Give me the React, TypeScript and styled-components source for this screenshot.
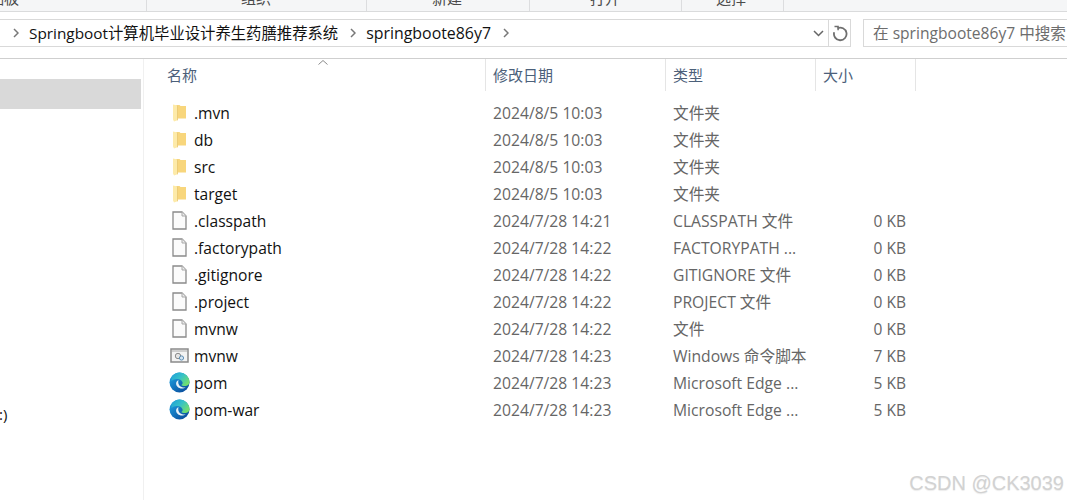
import React from 'react';
import styled, { createGlobalStyle } from 'styled-components';

const GlobalStyle = createGlobalStyle`
  html, body {
    margin: 0;
    padding: 0;
    background: #fff;
  }
  body {
    font-family: 'Open Sans', 'Noto Sans CJK SC', sans-serif;
  }
`;

const Window = styled.div`
  position: relative;
  width: 1067px;
  height: 500px;
  overflow: hidden;
  background: #fff;
  color: #1a1a1a;
`;

const Ribbon = styled.div`
  display: flex;
  height: 11px;
  overflow: hidden;
  background: #f5f6f7;
  border-bottom: 1px solid #dadbdc;
`;

const RibbonGroup = styled.div<{ $width: number }>`
  display: flex;
  align-items: flex-end;
  box-sizing: border-box;
  flex: none;
  width: ${(p) => p.$width}px;
  height: 11px;
  padding-bottom: 5px;
  border-right: 1px solid #dcdddf;
`;

const RibbonLabel = styled.span<{ $indent: number }>`
  margin-left: ${(p) => p.$indent}px;
  font-size: 15px;
  line-height: 15px;
  color: #4a4a4a;
  white-space: nowrap;
`;

const AddressRow = styled.div`
  display: flex;
  align-items: stretch;
  height: 28px;
  margin-top: 7px;
`;

const AddressBox = styled.div`
  display: flex;
  align-items: center;
  box-sizing: border-box;
  flex: none;
  width: 851px;
  border: 1px solid #d9d9d9;
  border-left: none;
  padding-left: 13px;
`;

const Crumb = styled.span<{ $size: number }>`
  font-size: ${(p) => p.$size}px;
  line-height: 20px;
  color: #111;
  white-space: nowrap;
  margin: 0 12px 0 10px;
`;

const Spacer = styled.div`
  flex: 1;
`;

const DropCaret = styled.svg`
  flex: none;
  margin-right: 4px;
`;

const RefreshCell = styled.div`
  display: flex;
  align-items: center;
  justify-content: center;
  align-self: stretch;
  flex: none;
  width: 21px;
  border-left: 1px solid #d9d9d9;
`;

const SearchBox = styled.div`
  flex: 1;
  margin-left: 12px;
  box-sizing: border-box;
  border: 1px solid #d9d9d9;
  border-right: none;
  padding-left: 9px;
  font-size: 15.6px;
  line-height: 26px;
  color: #6d6d6d;
  white-space: nowrap;
  overflow: hidden;
`;

const Body = styled.div`
  display: flex;
  height: 441px;
  margin-top: 11px;
  border-top: 1px solid #cfcfcf;
`;

const Sidebar = styled.div`
  flex: none;
  box-sizing: border-box;
  width: 144px;
  padding-top: 20px;
  border-right: 1px solid #f0f0f0;
`;

const SelectedNav = styled.div`
  width: 141px;
  height: 30px;
  background: #d9d9d9;
`;

const NavCut = styled.span`
  display: block;
  margin: 295px 0 0 -1px;
  font-size: 15px;
  line-height: 20px;
  color: #111;
`;

const Content = styled.div`
  flex: 1;
  min-width: 0;
`;

const HeaderRow = styled.div`
  position: relative;
  display: flex;
  height: 32px;
`;

const SortCaret = styled.svg`
  position: absolute;
  left: 174px;
  top: 1px;
`;

const HeaderCell = styled.div<{ $width: number }>`
  box-sizing: border-box;
  flex: none;
  width: ${(p) => p.$width}px;
  padding-left: 7px;
  font-size: 15px;
  line-height: 32px;
  color: #4c607a;
  border-right: 1px solid #e5e5e5;
  &:first-of-type {
    padding-left: 23px;
  }
`;

const Rows = styled.div`
  padding-top: 8px;
`;

const Row = styled.div`
  display: flex;
  align-items: center;
  height: 27px;
`;

const NameCell = styled.div`
  display: flex;
  align-items: center;
  flex: none;
  width: 342px;
  box-sizing: border-box;
  padding-left: 24px;
  font-size: 15.6px;
  color: #111;
`;

const IconSlot = styled.span`
  display: flex;
  align-items: center;
  justify-content: center;
  flex: none;
  width: 22px;
  height: 22px;
  margin-right: 4px;
`;

const DimCell = styled.div<{ $width: number }>`
  flex: none;
  box-sizing: border-box;
  width: ${(p) => p.$width}px;
  padding-left: 7px;
  font-size: 15.7px;
  color: #666;
  white-space: nowrap;
`;

const SizeCell = styled.div`
  flex: none;
  box-sizing: border-box;
  width: 90px;
  text-align: right;
  font-size: 15.5px;
  color: #666;
`;

const Watermark = styled.div`
  position: absolute;
  right: 3px;
  bottom: 6px;
  font-family: 'Liberation Sans', sans-serif;
  font-size: 20px;
  line-height: 22px;
  color: #d2d2d2;
  text-shadow: 0 1px 1px rgba(0, 0, 0, 0.08);
`;

const Chevron = () => (
  <svg width="6" height="10" viewBox="0 0 6 10" fill="none">
    <path d="M1 1l4 4-4 4" stroke="#777" strokeWidth="1.5" />
  </svg>
);

const FolderIcon = () => (
  <svg width="13" height="18" viewBox="0 0 13 18">
    <path d="M3 1h3.500l1 1H13v12.500H3z" fill="#f8d67c" />
    <path d="M0 .6l4.500.9v14.800L1 17.400 0 15.500z" fill="#fdeaa9" />
    <path d="M4.500 1.500v14.800" stroke="#e8c670" strokeWidth="0.8" />
  </svg>
);

const FileIcon = () => (
  <svg width="15" height="19" viewBox="0 0 15 19" fill="none">
    <path d="M1 1h9l4 4v13H1z" fill="#fbfbfb" stroke="#8a8a8a" strokeWidth="1.300" />
    <path d="M10 1v4h4" fill="#ececec" stroke="#a8a8a8" />
  </svg>
);

const ScriptIcon = () => (
  <svg width="19" height="15" viewBox="0 0 19 15" fill="none">
    <rect x="1" y="1" width="17" height="13" fill="#f3f3f3" stroke="#8a8a8a" strokeWidth="1.500" />
    <path d="M2 2h15v2H2z" fill="#cfcfcf" />
    <circle cx="8" cy="8" r="2.700" fill="#e4e4e4" stroke="#8b8b8b" />
    <circle cx="11.500" cy="10" r="2.100" fill="#d5e6f4" stroke="#5e8fb5" />
  </svg>
);

const EdgeIcon = ({ id }: { id: string }) => (
  <svg width="21" height="21" viewBox="0 0 21 21">
    <defs>
      <linearGradient id={`${id}-a`} x1="0" y1="0.200" x2="0.700" y2="1">
        <stop offset="0" stopColor="#1f9fe0" />
        <stop offset="1" stopColor="#0a4f9e" />
      </linearGradient>
      <linearGradient id={`${id}-b`} x1="0" y1="0" x2="1" y2="0.700">
        <stop offset="0" stopColor="#1f9fd8" />
        <stop offset="0.500" stopColor="#35c1c8" />
        <stop offset="1" stopColor="#74e06a" />
      </linearGradient>
    </defs>
    <circle cx="10.500" cy="10.500" r="10" fill={`url(#${id}-a)`} />
    <path
      d="M2.500 5C4.500 2 7.500.5 10.500.5c5.500 0 10 4.300 10 9.500 0 2.800-2.300 4-4.800 4-1.700 0-2.900-.5-3.300-1.100 1.100-.8 1.500-1.800 1-3-.7-1.700-3-2.900-5.400-2.900-2.300 0-4.300.8-5.500 2z"
      fill={`url(#${id}-b)`}
    />
    <path
      d="M9.500 8c-1.500.7-2.400 2-2.400 3.600 0 2.800 2.600 5 5.700 5 1.500 0 3-.4 4.200-1.300-1.200.3-2.500.3-3.700 0-1.600-.4-2.900-1.400-3.500-2.700-.7-1.400-.7-3.100-.3-4.600z"
      fill="#fff"
      opacity="0.900"
    />
  </svg>
);

const RefreshIcon = () => (
  <svg width="16" height="17" viewBox="0 0 16 17" fill="none">
    <path d="M5.500 3.300A6.300 6.300 0 1 1 2.200 7.200" stroke="#6f6f6f" strokeWidth="1.800" />
    <path d="M2.500 1.600h3.600v3.600" stroke="#6f6f6f" strokeWidth="1.500" />
  </svg>
);

type Entry = {
  name: string;
  date: string;
  kind: string;
  size?: string;
  icon: 'folder' | 'file' | 'script' | 'edge';
};

const entries: Entry[] = [
  { name: '.mvn', date: '2024/8/5 10:03', kind: '文件夹', icon: 'folder' },
  { name: 'db', date: '2024/8/5 10:03', kind: '文件夹', icon: 'folder' },
  { name: 'src', date: '2024/8/5 10:03', kind: '文件夹', icon: 'folder' },
  { name: 'target', date: '2024/8/5 10:03', kind: '文件夹', icon: 'folder' },
  { name: '.classpath', date: '2024/7/28 14:21', kind: 'CLASSPATH 文件', size: '0 KB', icon: 'file' },
  { name: '.factorypath', date: '2024/7/28 14:22', kind: 'FACTORYPATH ...', size: '0 KB', icon: 'file' },
  { name: '.gitignore', date: '2024/7/28 14:22', kind: 'GITIGNORE 文件', size: '0 KB', icon: 'file' },
  { name: '.project', date: '2024/7/28 14:22', kind: 'PROJECT 文件', size: '0 KB', icon: 'file' },
  { name: 'mvnw', date: '2024/7/28 14:22', kind: '文件', size: '0 KB', icon: 'file' },
  { name: 'mvnw', date: '2024/7/28 14:23', kind: 'Windows 命令脚本', size: '7 KB', icon: 'script' },
  { name: 'pom', date: '2024/7/28 14:23', kind: 'Microsoft Edge ...', size: '5 KB', icon: 'edge' },
  { name: 'pom-war', date: '2024/7/28 14:23', kind: 'Microsoft Edge ...', size: '5 KB', icon: 'edge' },
];

const ribbonGroups = [
  { label: '剪贴板', width: 147, indent: -26 },
  { label: '组织', width: 220, indent: 94 },
  { label: '新建', width: 163, indent: 65 },
  { label: '打开', width: 152, indent: 60 },
  { label: '选择', width: 102, indent: 34 },
];

const renderIcon = (entry: Entry, index: number) => {
  if (entry.icon === 'folder') return <FolderIcon />;
  if (entry.icon === 'file') return <FileIcon />;
  if (entry.icon === 'script') return <ScriptIcon />;
  return <EdgeIcon id={`edge-${index}`} />;
};

const App: React.FC = () => (
  <Window>
    <GlobalStyle />
    <Ribbon>
      {ribbonGroups.map((g) => (
        <RibbonGroup key={g.label} $width={g.width}>
          <RibbonLabel $indent={g.indent}>{g.label}</RibbonLabel>
        </RibbonGroup>
      ))}
    </Ribbon>
    <AddressRow>
      <AddressBox>
        <Chevron />
        <Crumb $size={15.35}>Springboot计算机毕业设计养生药膳推荐系统</Crumb>
        <Chevron />
        <Crumb $size={15.9}>springboote86y7</Crumb>
        <Chevron />
        <Spacer />
        <DropCaret width="11" height="7" viewBox="0 0 11 7" fill="none">
          <path d="M1 1l4.500 4.500L10 1" stroke="#666" strokeWidth="1.500" />
        </DropCaret>
        <RefreshCell>
          <RefreshIcon />
        </RefreshCell>
      </AddressBox>
      <SearchBox>在 springboote86y7 中搜索</SearchBox>
    </AddressRow>
    <Body>
      <Sidebar>
        <SelectedNav />
        <NavCut>:)</NavCut>
      </Sidebar>
      <Content>
        <HeaderRow>
          <SortCaret width="10" height="5" viewBox="0 0 10 5" fill="none">
            <path d="M0.500 4.500L5 0.500l4.500 4" stroke="#8a8a8a" />
          </SortCaret>
          <HeaderCell $width={342}>名称</HeaderCell>
          <HeaderCell $width={180}>修改日期</HeaderCell>
          <HeaderCell $width={150}>类型</HeaderCell>
          <HeaderCell $width={100}>大小</HeaderCell>
        </HeaderRow>
        <Rows>
          {entries.map((entry, i) => (
            <Row key={`${entry.name}-${i}`}>
              <NameCell>
                <IconSlot>{renderIcon(entry, i)}</IconSlot>
                {entry.name}
              </NameCell>
              <DimCell $width={180}>{entry.date}</DimCell>
              <DimCell $width={150}>{entry.kind}</DimCell>
              <SizeCell>{entry.size}</SizeCell>
            </Row>
          ))}
        </Rows>
      </Content>
    </Body>
    <Watermark>CSDN @CK3039</Watermark>
  </Window>
);

export default App;
